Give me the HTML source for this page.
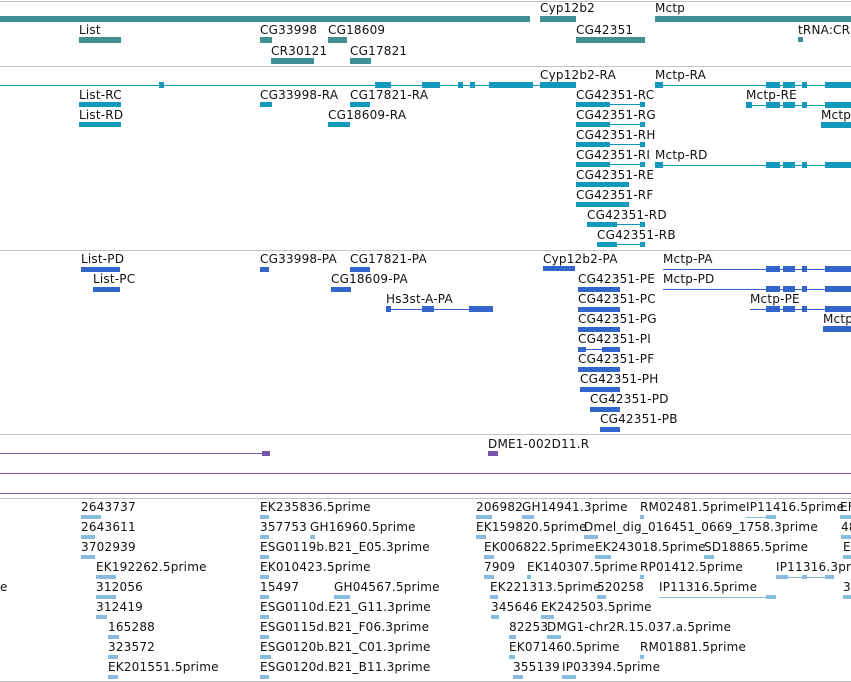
<!DOCTYPE html>
<html><head><meta charset="utf-8"><style>
body{margin:0;width:851px;height:682px;background:#fff;position:relative;overflow:hidden;font-family:"DejaVu Sans","Liberation Sans",sans-serif;font-size:12px;color:#111}
.t{position:absolute;white-space:nowrap;line-height:12px;letter-spacing:0.2px}
.b{position:absolute}
.g{position:absolute;left:0;width:851px;height:1px;background:#c4c4c4}
.tl{background:#3f8f93}.tr{background:#1199bb}.p{background:#3366cc}.pu{background:#7755aa}.e{background:#88bbdd}
</style></head><body>
<div class="g" style="top:1px"></div>
<div class="g" style="top:66px"></div>
<div class="g" style="top:250px"></div>
<div class="g" style="top:434px"></div>
<div class="g" style="top:498px"></div>
<div class="g" style="top:681px"></div>

<!-- track1 genes -->
<div class="b tl" style="left:0;top:16px;width:530px;height:6px"></div>
<div class="b tl" style="left:540;left:540px;top:16px;width:36px;height:6px"></div>
<div class="b tl" style="left:655px;top:16px;width:196px;height:6px"></div>
<div class="t" style="left:540px;top:2px">Cyp12b2</div>
<div class="t" style="left:655px;top:2px">Mctp</div>
<div class="t" style="left:79px;top:24px">List</div>
<div class="b tl" style="left:79px;top:37px;width:42px;height:6px"></div>
<div class="t" style="left:260px;top:24px">CG33998</div>
<div class="b tl" style="left:260px;top:37px;width:12px;height:6px"></div>
<div class="t" style="left:328px;top:24px">CG18609</div>
<div class="b tl" style="left:328px;top:37px;width:19px;height:6px"></div>
<div class="t" style="left:271px;top:45px">CR30121</div>
<div class="b tl" style="left:271px;top:58px;width:43px;height:6px"></div>
<div class="t" style="left:350px;top:45px">CG17821</div>
<div class="b tl" style="left:350px;top:58px;width:21px;height:6px"></div>
<div class="t" style="left:576px;top:24px">CG42351</div>
<div class="b tl" style="left:576px;top:37px;width:69px;height:6px"></div>
<div class="t" style="left:798px;top:24px">tRNA:CR3</div>
<div class="b tl" style="left:798px;top:37px;width:5px;height:5px"></div>

<!-- track2 transcripts -->
<div class="b tr" style="left:0;top:85px;width:540px;height:1px"></div>
<div class="b tr" style="left:159px;top:82px;width:5px;height:6px"></div>
<div class="b tr" style="left:375px;top:82px;width:16px;height:6px"></div>
<div class="b tr" style="left:422px;top:82px;width:18px;height:6px"></div>
<div class="b tr" style="left:458px;top:82px;width:5px;height:6px"></div>
<div class="b tr" style="left:470px;top:82px;width:5px;height:6px"></div>
<div class="b tr" style="left:489px;top:82px;width:44px;height:6px"></div>
<div class="t" style="left:540px;top:69px">Cyp12b2-RA</div>
<div class="b tr" style="left:540px;top:82px;width:36px;height:6px"></div>
<div class="t" style="left:655px;top:69px">Mctp-RA</div>
<div class="b tr" style="left:655px;top:85px;width:196px;height:1px"></div>
<div class="b tr" style="left:655px;top:82px;width:8px;height:6px"></div>
<div class="b tr" style="left:766px;top:82px;width:14px;height:6px"></div>
<div class="b tr" style="left:783px;top:82px;width:12px;height:6px"></div>
<div class="b tr" style="left:802px;top:82px;width:5px;height:6px"></div>
<div class="b tr" style="left:825px;top:82px;width:26px;height:6px"></div>
<div class="t" style="left:79px;top:89px">List-RC</div>
<div class="b tr" style="left:79px;top:102px;width:42px;height:5px"></div>
<div class="t" style="left:79px;top:109px">List-RD</div>
<div class="b tr" style="left:79px;top:122px;width:42px;height:5px"></div>
<div class="t" style="left:260px;top:89px">CG33998-RA</div>
<div class="b tr" style="left:260px;top:102px;width:12px;height:5px"></div>
<div class="t" style="left:350px;top:89px">CG17821-RA</div>
<div class="b tr" style="left:350px;top:102px;width:20px;height:5px"></div>
<div class="t" style="left:328px;top:109px">CG18609-RA</div>
<div class="b tr" style="left:328px;top:122px;width:22px;height:5px"></div>
<div class="t" style="left:576px;top:89px">CG42351-RC</div>
<div class="b tr" style="left:576px;top:102px;width:34px;height:5px"></div><div class="b tr" style="left:576px;top:104px;width:69px;height:1px"></div><div class="b tr" style="left:640px;top:102px;width:5px;height:5px"></div>
<div class="t" style="left:576px;top:109px">CG42351-RG</div>
<div class="b tr" style="left:576px;top:122px;width:34px;height:5px"></div><div class="b tr" style="left:576px;top:124px;width:69px;height:1px"></div><div class="b tr" style="left:640px;top:122px;width:5px;height:5px"></div>
<div class="t" style="left:576px;top:129px">CG42351-RH</div>
<div class="b tr" style="left:576px;top:142px;width:34px;height:5px"></div><div class="b tr" style="left:576px;top:144px;width:69px;height:1px"></div><div class="b tr" style="left:640px;top:142px;width:5px;height:5px"></div>
<div class="t" style="left:576px;top:149px">CG42351-RI</div>
<div class="b tr" style="left:576px;top:162px;width:34px;height:5px"></div><div class="b tr" style="left:576px;top:164px;width:69px;height:1px"></div><div class="b tr" style="left:640px;top:162px;width:5px;height:5px"></div>
<div class="t" style="left:655px;top:149px">Mctp-RD</div>
<div class="b tr" style="left:655px;top:165px;width:196px;height:1px"></div>
<div class="b tr" style="left:655px;top:162px;width:8px;height:6px"></div>
<div class="b tr" style="left:766px;top:162px;width:14px;height:6px"></div>
<div class="b tr" style="left:783px;top:162px;width:12px;height:6px"></div>
<div class="b tr" style="left:802px;top:162px;width:5px;height:6px"></div>
<div class="b tr" style="left:825px;top:162px;width:26px;height:6px"></div>
<div class="t" style="left:576px;top:169px">CG42351-RE</div>
<div class="b tr" style="left:576px;top:182px;width:53px;height:5px"></div>
<div class="t" style="left:576px;top:189px">CG42351-RF</div>
<div class="b tr" style="left:576px;top:202px;width:53px;height:5px"></div>
<div class="t" style="left:587px;top:209px">CG42351-RD</div>
<div class="b tr" style="left:587px;top:222px;width:30px;height:5px"></div><div class="b tr" style="left:587px;top:224px;width:58px;height:1px"></div><div class="b tr" style="left:640px;top:222px;width:5px;height:5px"></div>
<div class="t" style="left:597px;top:229px">CG42351-RB</div>
<div class="b tr" style="left:597px;top:242px;width:20px;height:5px"></div><div class="b tr" style="left:597px;top:244px;width:48px;height:1px"></div><div class="b tr" style="left:640px;top:242px;width:5px;height:5px"></div>
<div class="t" style="left:746px;top:89px">Mctp-RE</div>
<div class="b tr" style="left:746px;top:105px;width:105px;height:1px"></div>
<div class="b tr" style="left:746px;top:102px;width:6px;height:6px"></div>
<div class="b tr" style="left:766px;top:102px;width:14px;height:6px"></div>
<div class="b tr" style="left:783px;top:102px;width:12px;height:6px"></div>
<div class="b tr" style="left:802px;top:102px;width:5px;height:6px"></div>
<div class="b tr" style="left:825px;top:102px;width:26px;height:6px"></div>
<div class="t" style="left:821px;top:109px">Mctp-RB</div>
<div class="b tr" style="left:821px;top:122px;width:30px;height:6px"></div>

<!-- track3 proteins -->
<div class="t" style="left:81px;top:253px">List-PD</div>
<div class="b p" style="left:81px;top:267px;width:39px;height:5px"></div>
<div class="t" style="left:93px;top:273px">List-PC</div>
<div class="b p" style="left:93px;top:287px;width:27px;height:5px"></div>
<div class="t" style="left:260px;top:253px">CG33998-PA</div>
<div class="b p" style="left:260px;top:267px;width:9px;height:5px"></div>
<div class="t" style="left:350px;top:253px">CG17821-PA</div>
<div class="b p" style="left:350px;top:267px;width:20px;height:5px"></div>
<div class="t" style="left:331px;top:273px">CG18609-PA</div>
<div class="b p" style="left:331px;top:287px;width:20px;height:5px"></div>
<div class="t" style="left:386px;top:293px">Hs3st-A-PA</div>
<div class="b p" style="left:386px;top:309px;width:107px;height:1px"></div>
<div class="b p" style="left:386px;top:306px;width:5px;height:6px"></div><div class="b p" style="left:422px;top:306px;width:12px;height:6px"></div><div class="b p" style="left:469px;top:306px;width:24px;height:6px"></div>
<div class="t" style="left:543px;top:253px">Cyp12b2-PA</div>
<div class="b p" style="left:543px;top:266px;width:32px;height:5px"></div>
<div class="t" style="left:663px;top:253px">Mctp-PA</div>
<div class="b p" style="left:663px;top:269px;width:188px;height:1px"></div>
<div class="b p" style="left:766px;top:266px;width:14px;height:6px"></div><div class="b p" style="left:783px;top:266px;width:12px;height:6px"></div><div class="b p" style="left:802px;top:266px;width:5px;height:6px"></div><div class="b p" style="left:825px;top:266px;width:26px;height:6px"></div>
<div class="t" style="left:578px;top:273px">CG42351-PE</div>
<div class="b p" style="left:578px;top:287px;width:42px;height:5px"></div>
<div class="t" style="left:663px;top:273px">Mctp-PD</div>
<div class="b p" style="left:663px;top:289px;width:188px;height:1px"></div>
<div class="b p" style="left:766px;top:286px;width:14px;height:6px"></div><div class="b p" style="left:783px;top:286px;width:12px;height:6px"></div><div class="b p" style="left:802px;top:286px;width:5px;height:6px"></div><div class="b p" style="left:825px;top:286px;width:26px;height:6px"></div>
<div class="t" style="left:578px;top:293px">CG42351-PC</div>
<div class="b p" style="left:578px;top:307px;width:42px;height:5px"></div>
<div class="t" style="left:750px;top:293px">Mctp-PE</div>
<div class="b p" style="left:750px;top:309px;width:101px;height:1px"></div>
<div class="b p" style="left:766px;top:306px;width:14px;height:6px"></div><div class="b p" style="left:783px;top:306px;width:12px;height:6px"></div><div class="b p" style="left:802px;top:306px;width:5px;height:6px"></div><div class="b p" style="left:825px;top:306px;width:26px;height:6px"></div>
<div class="t" style="left:823px;top:313px">Mctp-PB</div>
<div class="b p" style="left:823px;top:326px;width:28px;height:6px"></div>
<div class="t" style="left:578px;top:313px">CG42351-PG</div>
<div class="b p" style="left:578px;top:327px;width:42px;height:5px"></div>
<div class="t" style="left:578px;top:333px">CG42351-PI</div>
<div class="b p" style="left:578px;top:347px;width:8px;height:5px"></div><div class="b p" style="left:578px;top:349px;width:42px;height:1px"></div><div class="b p" style="left:602px;top:347px;width:18px;height:5px"></div>
<div class="t" style="left:578px;top:353px">CG42351-PF</div>
<div class="b p" style="left:578px;top:367px;width:42px;height:5px"></div>
<div class="t" style="left:580px;top:373px">CG42351-PH</div>
<div class="b p" style="left:580px;top:387px;width:40px;height:5px"></div>
<div class="t" style="left:590px;top:393px">CG42351-PD</div>
<div class="b p" style="left:590px;top:407px;width:30px;height:5px"></div>
<div class="t" style="left:600px;top:413px">CG42351-PB</div>
<div class="b p" style="left:600px;top:427px;width:20px;height:5px"></div>

<!-- track4 -->
<div class="b pu" style="left:0;top:453px;width:270px;height:1px"></div>
<div class="b pu" style="left:262px;top:451px;width:8px;height:5px"></div>
<div class="t" style="left:488px;top:438px">DME1-002D11.R</div>
<div class="b pu" style="left:488px;top:451px;width:10px;height:5px"></div>
<div class="b pu" style="left:0;top:473px;width:851px;height:1px"></div>
<div class="b pu" style="left:0;top:493px;width:851px;height:1px"></div>

<!-- track5 ESTs -->
<div class="t" style="left:81px;top:501px">2643737</div><div class="b e" style="left:81px;top:515px;width:20px;height:4px"></div>
<div class="t" style="left:260px;top:501px">EK235836.5prime</div><div class="b e" style="left:260px;top:515px;width:9px;height:4px"></div>
<div class="t" style="left:476px;top:501px">206982</div><div class="b e" style="left:476px;top:515px;width:16px;height:4px"></div>
<div class="t" style="left:522px;top:501px">GH14941.3prime</div><div class="b e" style="left:522px;top:515px;width:12px;height:4px"></div>
<div class="t" style="left:640px;top:501px">RM02481.5prime</div><div class="b e" style="left:640px;top:515px;width:4px;height:4px"></div>
<div class="t" style="left:746px;top:501px">IP11416.5prime</div><div class="b e" style="left:746px;top:517px;width:30px;height:1px"></div><div class="b e" style="left:766px;top:515px;width:10px;height:4px"></div>
<div class="t" style="left:840px;top:501px">EF</div><div class="b e" style="left:840px;top:515px;width:11px;height:4px"></div>

<div class="t" style="left:81px;top:521px">2643611</div><div class="b e" style="left:81px;top:535px;width:14px;height:4px"></div>
<div class="t" style="left:260px;top:521px">357753</div><div class="b e" style="left:260px;top:535px;width:9px;height:4px"></div>
<div class="t" style="left:310px;top:521px">GH16960.5prime</div><div class="b e" style="left:310px;top:535px;width:5px;height:4px"></div>
<div class="t" style="left:476px;top:521px">EK159820.5prime</div><div class="b e" style="left:476px;top:535px;width:10px;height:4px"></div>
<div class="t" style="left:584px;top:521px">Dmel_dig_016451_0669_1758.3prime</div><div class="b e" style="left:584px;top:535px;width:14px;height:4px"></div>
<div class="t" style="left:841px;top:521px">48</div><div class="b e" style="left:841px;top:535px;width:10px;height:4px"></div>

<div class="t" style="left:81px;top:541px">3702939</div><div class="b e" style="left:81px;top:555px;width:14px;height:4px"></div>
<div class="t" style="left:260px;top:541px">ESG0119b.B21_E05.3prime</div><div class="b e" style="left:260px;top:555px;width:9px;height:4px"></div>
<div class="t" style="left:484px;top:541px">EK006822.5prime</div><div class="b e" style="left:484px;top:555px;width:10px;height:4px"></div>
<div class="t" style="left:595px;top:541px">EK243018.5prime</div><div class="b e" style="left:595px;top:555px;width:16px;height:4px"></div>
<div class="t" style="left:704px;top:541px">SD18865.5prime</div><div class="b e" style="left:704px;top:555px;width:10px;height:4px"></div>
<div class="t" style="left:843px;top:541px">E</div><div class="b e" style="left:843px;top:555px;width:8px;height:4px"></div>

<div class="t" style="left:96px;top:561px">EK192262.5prime</div><div class="b e" style="left:96px;top:575px;width:20px;height:4px"></div>
<div class="t" style="left:260px;top:561px">EK010423.5prime</div><div class="b e" style="left:260px;top:575px;width:9px;height:4px"></div>
<div class="t" style="left:484px;top:561px">7909</div><div class="b e" style="left:484px;top:575px;width:10px;height:4px"></div>
<div class="t" style="left:527px;top:561px">EK140307.5prime</div><div class="b e" style="left:527px;top:575px;width:4px;height:4px"></div>
<div class="t" style="left:640px;top:561px">RP01412.5prime</div><div class="b e" style="left:640px;top:575px;width:4px;height:4px"></div>
<div class="t" style="left:776px;top:561px">IP11316.3prime</div><div class="b e" style="left:776px;top:577px;width:58px;height:1px"></div><div class="b e" style="left:776px;top:575px;width:12px;height:4px"></div><div class="b e" style="left:802px;top:575px;width:5px;height:4px"></div><div class="b e" style="left:825px;top:575px;width:9px;height:4px"></div>

<div class="t" style="left:0px;top:581px">e</div>
<div class="t" style="left:96px;top:581px">312056</div><div class="b e" style="left:96px;top:595px;width:20px;height:4px"></div>
<div class="t" style="left:260px;top:581px">15497</div><div class="b e" style="left:260px;top:595px;width:9px;height:4px"></div>
<div class="t" style="left:334px;top:581px">GH04567.5prime</div><div class="b e" style="left:334px;top:595px;width:16px;height:4px"></div>
<div class="t" style="left:490px;top:581px">EK221313.5prime</div><div class="b e" style="left:490px;top:595px;width:8px;height:4px"></div>
<div class="t" style="left:597px;top:581px">520258</div><div class="b e" style="left:597px;top:595px;width:9px;height:4px"></div>
<div class="t" style="left:659px;top:581px">IP11316.5prime</div><div class="b e" style="left:659px;top:597px;width:117px;height:1px"></div><div class="b e" style="left:766px;top:595px;width:10px;height:4px"></div>
<div class="t" style="left:843px;top:581px">3</div><div class="b e" style="left:843px;top:595px;width:8px;height:4px"></div>

<div class="t" style="left:96px;top:601px">312419</div><div class="b e" style="left:96px;top:615px;width:11px;height:4px"></div>
<div class="t" style="left:260px;top:601px">ESG0110d.E21_G11.3prime</div><div class="b e" style="left:260px;top:615px;width:9px;height:4px"></div>
<div class="t" style="left:491px;top:601px">345646</div><div class="b e" style="left:491px;top:615px;width:8px;height:4px"></div>
<div class="t" style="left:541px;top:601px">EK242503.5prime</div><div class="b e" style="left:541px;top:615px;width:13px;height:4px"></div>

<div class="t" style="left:108px;top:621px">165288</div><div class="b e" style="left:108px;top:635px;width:11px;height:4px"></div>
<div class="t" style="left:260px;top:621px">ESG0115d.B21_F06.3prime</div><div class="b e" style="left:260px;top:635px;width:9px;height:4px"></div>
<div class="t" style="left:509px;top:621px">82253</div><div class="b e" style="left:509px;top:635px;width:7px;height:4px"></div>
<div class="t" style="left:547px;top:621px">DMG1-chr2R.15.037.a.5prime</div><div class="b e" style="left:547px;top:635px;width:14px;height:4px"></div>

<div class="t" style="left:108px;top:641px">323572</div><div class="b e" style="left:108px;top:655px;width:10px;height:4px"></div>
<div class="t" style="left:260px;top:641px">ESG0120b.B21_C01.3prime</div><div class="b e" style="left:260px;top:655px;width:11px;height:4px"></div>
<div class="t" style="left:509px;top:641px">EK071460.5prime</div><div class="b e" style="left:509px;top:655px;width:6px;height:4px"></div>
<div class="t" style="left:640px;top:641px">RM01881.5prime</div><div class="b e" style="left:640px;top:655px;width:4px;height:4px"></div>

<div class="t" style="left:108px;top:661px">EK201551.5prime</div><div class="b e" style="left:108px;top:675px;width:10px;height:4px"></div>
<div class="t" style="left:260px;top:661px">ESG0120d.B21_B11.3prime</div><div class="b e" style="left:260px;top:675px;width:9px;height:4px"></div>
<div class="t" style="left:513px;top:661px">355139</div><div class="b e" style="left:513px;top:675px;width:10px;height:4px"></div>
<div class="t" style="left:562px;top:661px">IP03394.5prime</div><div class="b e" style="left:562px;top:675px;width:14px;height:4px"></div>
</body></html>
